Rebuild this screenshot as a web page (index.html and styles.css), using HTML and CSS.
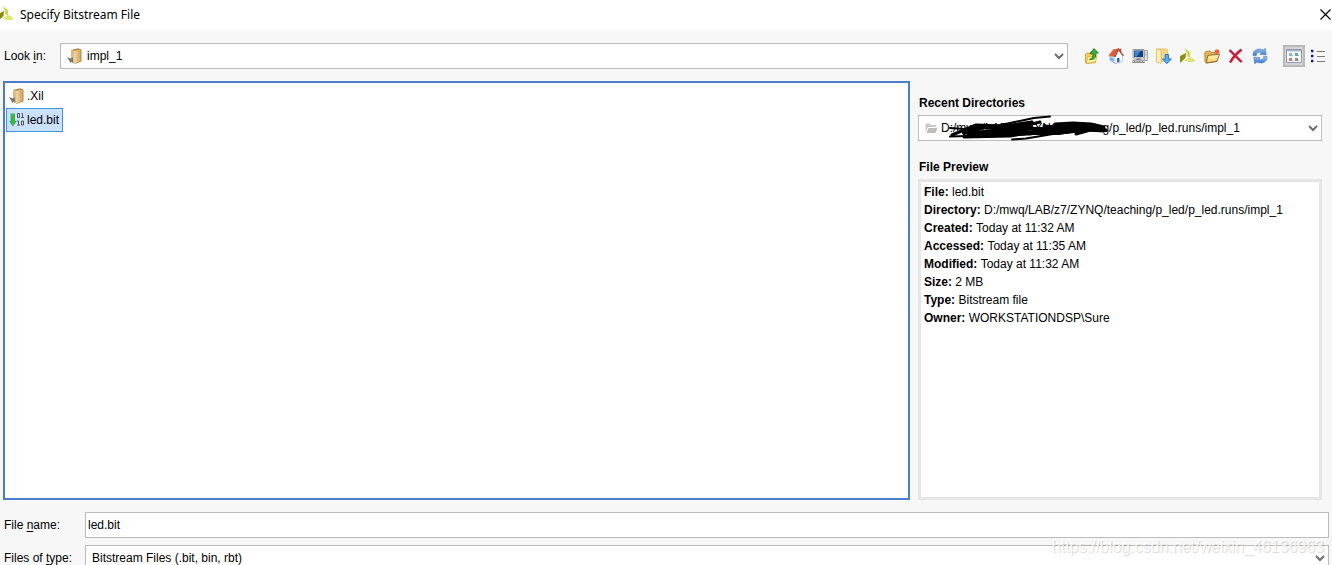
FILE: index.html
```html
<!DOCTYPE html>
<html lang="en">
<head>
<meta charset="utf-8">
<title>Specify Bitstream File</title>
<link rel="stylesheet" href="styles.css">
</head>
<body>
<svg class="defs" aria-hidden="true">
  <defs>
    <linearGradient id="tan" x1="0" x2="1"><stop offset="0" stop-color="#f3dcaa"/><stop offset="1" stop-color="#cfa566"/></linearGradient>
    <linearGradient id="gold" x1="0" y1="0" x2="0" y2="1"><stop offset="0" stop-color="#fff6b8"/><stop offset="1" stop-color="#f3ca5c"/></linearGradient>
    <linearGradient id="blue" x1="0" y1="0" x2="0" y2="1"><stop offset="0" stop-color="#9cc6f2"/><stop offset="1" stop-color="#3474c4"/></linearGradient>
    <symbol id="folder" viewBox="0 0 16 16">
      <path d="M4 2 11 .3 14.500 1.500v12L8 15.800 4 14z" fill="#b58c4c"/>
      <path d="M4 2.200 6.500 1.500v13L4 13.500z" fill="#dcb97a"/>
      <path d="m6.500 3 7-1.500v11.500L8 15.300l-1.500-.8z" fill="url(#tan)"/>
      <path d="M0 9 3.500 10.500 6 9.500v5L4 13.200V15.500L2 12.500z" fill="#7b7770"/>
    </symbol>
    <symbol id="xilinx" viewBox="0 0 16 16">
      <path d="M4.500 0 10 4.200V9H7.500L6.800 5z" fill="#d3d944"/>
      <path d="m0 8 6-3-.5 5L0 15z" fill="#8a8c13"/>
      <path d="m9 9.500 2-.5 5 4-4.500 1.500L4 12.500z" fill="#e0e478"/>
    </symbol>
    <symbol id="chevron" viewBox="0 0 10 7"><path d="m1 1 4 4 4-4" fill="none" stroke="#6e6e6e" stroke-width="2"/></symbol>
  </defs>
</svg>
<main class="dialog">
  <header class="titlebar">
    <svg class="logo" viewBox="2 0 14 16"><use href="#xilinx" width="16" height="16"/></svg>
    <h1 class="title">Specify Bitstream File</h1>
    <button class="close" aria-label="Close"><svg viewBox="0 0 11 11"><path d="m.5.5 10 10m0-10-10 10" stroke="#000" stroke-width="1.200"/></svg></button>
  </header>

  <div class="toolbar">
    <label for="look">Look <u>i</u>n:</label>
    <div class="field look">
      <svg class="icon"><use href="#folder"/></svg>
      <select id="look"><option>impl_1</option></select>
      <svg class="chevron"><use href="#chevron"/></svg>
    </div>
    <div class="tools">
      <button class="tool" aria-label="Up one level"><svg viewBox="0 0 16 16">
        <path d="M1.500 6 2.500 5h3l1 1.500h5v8l-9 1-1-1z" fill="#f3d05c" stroke="#d09a2c" stroke-width=".8"/>
        <path d="m3.500 9 9.500-1-1.500 6-9 1.300z" fill="#fff1a0" stroke="#d5a53c" stroke-width=".7"/>
        <path d="M5.500 11.500C8.500 10.500 9 9 9 5.500H5.800L10 .5l4.300 4.500H12C12 10 10 12 5.500 11.500z" fill="#3cae35" stroke="#197018" stroke-width=".8"/></svg></button>
      <button class="tool" aria-label="Home"><svg viewBox="0 0 16 16">
        <path d="M2 7.500V12l5.500 3.500 6.500-2V7L10 2z" fill="#c6dff8" stroke="#6f95c4" stroke-width=".8"/>
        <path d="m7.500 9 3.500-5 3 3.500v5.700L7.500 15.200z" fill="#fafcff"/>
        <path d="M11.500.8h1.800v4l-1.800-1.500z" fill="#a5482b"/>
        <path d="M.5 7.500 5.500 1.200 10.500.6 7 9l-3-.5z" fill="#d9603a"/>
        <path d="M6.700 9 10.600 1l4.900 7" fill="none" stroke="#b8492b" stroke-width="1.300"/>
        <path d="M9 10h2.500v3.800L9 14.500z" fill="#3768ae"/><path d="M3 9.500 5.500 11v2L3 11.500z" fill="#5a94d8"/></svg></button>
      <button class="tool" aria-label="My Computer"><svg viewBox="0 0 16 16">
        <path d="M12.500 2.500h3v10h-3z" fill="#e2e2e2" stroke="#999" stroke-width=".8"/><path d="M13 5h2M13 7h2" stroke="#aaa" stroke-width=".7"/>
        <path d="M1 1.500h11V10H1z" fill="#e8e9ea" stroke="#9a9a9a"/>
        <path d="M2 2.500h9V9H2z" fill="#143f80"/><path d="M2.500 3h6L5 8.500H2.500z" fill="#3f86c8"/>
        <path d="M4.500 10.300h4V12h-4z" fill="#888"/><path d="m1.500 12-1 2.500h12l-1-2.500z" fill="#eee" stroke="#777" stroke-width=".8"/><path d="M2 13.300h9" stroke="#666" stroke-dasharray="1 .6"/></svg></button>
      <button class="tool" aria-label="Downloads"><svg viewBox="0 0 16 16">
        <path d="M.5.5H10l2 1V14H.5z" fill="#e5c06a"/><path d="M5 1.500h6.500V14H5z" fill="#f1d68c"/><path d="M.5.8 5 2v13.500L.5 14z" fill="#fff0b7" stroke="#d3aa50" stroke-width=".6"/>
        <path d="M9.200 6.500h3.300V11h3l-4.700 4.700L6.500 11h2.700z" fill="#55aaf0" stroke="#1768b5" stroke-width=".8"/></svg></button>
      <button class="tool" aria-label="Vivado directory"><svg><use href="#xilinx"/></svg></button>
      <button class="tool" aria-label="New folder"><svg viewBox="0 0 16 16">
        <path d="M.8 4.500 2.500 3.300 6 3l1 1.500h6v9L2.500 15 1 13.500z" fill="#e6b84c" stroke="#a8782b" stroke-width=".8"/>
        <path d="m4 7.300 11.500-1L13 13.200 2 15z" fill="url(#gold)" stroke="#80602c" stroke-width=".9"/>
        <path d="m13 .3.800 2 2-.5-.8 2 .8 1.700-2-.2-.8 1.500-1-1.500-2 .2 1-1.700-.8-2 2 .5z" fill="#f0602e"/></svg></button>
      <button class="tool" aria-label="Delete"><svg viewBox="0 0 16 16" fill="none">
        <path d="M2.500 3 14.500 14.500M14 2.500C9 6 6 9.500 3 15" stroke="#888" stroke-width="2.200" opacity=".35"/><path d="m1.500 2 12 12M13.500 1.500C9 5 5 9 2 14.500" stroke="#cd1735" stroke-width="2.300"/></svg></button>
      <button class="tool" aria-label="Refresh"><svg viewBox="0 0 16 16" fill="url(#blue)" stroke="#4c7cb8" stroke-width=".6">
        <path d="M1 7.500C.5 2 6.500-.5 11 2l2.300-1.700.9 6.500-6.400-.5 1.700-1.500C6.500 3.500 4 5 4.300 7.800z"/>
        <path d="M15 8.500c.5 5.500-5.500 8-10 5.500l-2.300 1.700-.9-6.500 6.400.5-1.700 1.500C9.500 12.500 12 11 11.700 8.200z"/></svg></button>
    </div>
    <div class="views">
      <button class="tool pressed" aria-label="Icon view"><svg viewBox="0 0 16 16">
        <path d="M.5 1.500h15v13H.5z" fill="#fafcff" stroke="#8b9bb0"/><path d="M1 2h14v1.500H1z" fill="#a9b8ca"/>
        <path d="M3 5h3v3H3z" fill="#85b4dc"/><path d="M9 5h3v3H9z" fill="#67a8a0"/><path d="M3 10h3v3H3z" fill="#de7070"/><path d="M9 10h3v3H9z" fill="#8b8b8b"/><path d="M6 7.500h1.500M12 7.500h1.500M6 12.500h1.500M12 12.500h1.500" stroke="#bbb"/></svg></button>
      <button class="tool" aria-label="List view"><svg viewBox="0 0 16 16">
        <path d="M7 3.500h8m-8 5h8m-8 5h8" stroke="#777"/><path d="M1 3h2M1 8h2M1 13h2" stroke="#0014e0" stroke-width="2.400"/><path d="M3.500 2v2m0 3v2m0 3v2" stroke="#99a"/></svg></button>
    </div>
  </div>

  <div class="content">
    <section class="files" aria-label="Files">
      <button class="file"><svg class="icon"><use href="#folder"/></svg>.Xil</button>
      <button class="file selected"><svg class="icon" viewBox="0 0 16 16">
        <path d="M1.500 1.500H6V9h2l-4.200 5.500L0 9h1.500z" fill="#39b54a"/>
        <path d="M8.500 1.500h2v4h-2zM12.500 9h2v4h-2z" fill="none" stroke="#555"/><path d="M12.500 1.500h1V5M12 5.500h3M8 9h1.500v3.500M8 13h3" fill="none" stroke="#555"/></svg>led.bit</button>
    </section>
    <aside class="side">
      <label class="heading" for="recent">Recent Directories</label>
      <div class="field recent">
        <svg class="icon small" viewBox="0 0 13 12"><path d="M.5 10V1.500h4L6 3h5v2H3z" fill="#c8c8c8"/><path d="M3.500 6h9L10.500 11H1.500z" fill="#bdbdbd"/></svg>
        <select id="recent"><option>D:/mwq/LAB/z7/ZYNQ/teaching/p_led/p_led.runs/impl_1</option></select>
        <svg class="chevron"><use href="#chevron"/></svg>
        <svg class="scribble" viewBox="0 0 164 28" fill="none" stroke="#000" stroke-linecap="round" stroke-linejoin="round">
          <path stroke-width="2" d="M102 1.500 86 3 62 8 38 13 14 16M2 21.500l34-1 46-1 20-3M64 24.500l14-1 30-5M2 13l14 1 20-2"/>
          <path stroke-width="3" d="m4 20 24-10 28 1 28-4-30 7-34 5 40-4 32-8-36 9-40 6 46-1 32-5"/>
          <path stroke-width="4" d="m16 18 20-6 24 2 24-1-20 3-36 2 40 1 30-3"/>
          <path stroke-width="3" d="M107 9l18-1 18 1 13 3M106 12l20-2 24 3 8 2M96 11l26 2-18 5 32-6-24 6 28-3 16 1M128 19l18-5 10 0"/>
          <path stroke-width="4" d="M84 14l26 0 26-2-10 3-40 3 24 0 20-3 22-1"/>
        </svg>
      </div>
      <h2 class="heading">File Preview</h2>
      <dl class="preview">
        <div><dt>File:</dt> <dd>led.bit</dd></div>
        <div><dt>Directory:</dt> <dd>D:/mwq/LAB/z7/ZYNQ/teaching/p_led/p_led.runs/impl_1</dd></div>
        <div><dt>Created:</dt> <dd>Today at 11:32 AM</dd></div>
        <div><dt>Accessed:</dt> <dd>Today at 11:35 AM</dd></div>
        <div><dt>Modified:</dt> <dd>Today at 11:32 AM</dd></div>
        <div><dt>Size:</dt> <dd>2 MB</dd></div>
        <div><dt>Type:</dt> <dd>Bitstream file</dd></div>
        <div><dt>Owner:</dt> <dd>WORKSTATIONDSP\Sure</dd></div>
      </dl>
    </aside>
  </div>

  <form class="form">
    <label for="name">File <u>n</u>ame:</label>
    <div class="field"><input id="name" type="text" value="led.bit"></div>
    <label for="type">Files of <u>t</u>ype:</label>
    <div class="field type">
      <select id="type"><option>Bitstream Files (.bit, bin, rbt)</option></select>
      <svg class="chevron"><use href="#chevron"/></svg>
    </div>
  </form>
</main>
<span class="watermark">https://blog.csdn.net/weixin_46136963</span>
</body>
</html>
```
FILE: styles.css
```css
* { box-sizing: border-box; }

body {
  position: relative;
  height: 100vh;
  margin: 0;
  overflow: hidden;
  background: #f7f7f7;
  color: #000;
  font: 12px/18px "Liberation Sans", Arial, sans-serif;
}

button, input, select { color: inherit; font: inherit; }
button { padding: 0; border: 0; background: none; }
h1, h2, dl, dd { margin: 0; }
u { text-underline-offset: 2px; }
.defs { position: absolute; width: 0; height: 0; }

.dialog {
  display: flex;
  flex-direction: column;
  /* the type row continues below the fold */
  height: calc(100vh + 14px);
}

.titlebar {
  display: flex;
  align-items: center;
  height: 30px;
  background: #fff;
}
.logo { width: 14px; height: 16px; margin-right: 6px; margin-bottom: 2px; }
.title {
  flex: 1;
  font: 12px/18px "Noto Sans", sans-serif;
}
.close { width: 11px; height: 11px; margin-right: 1px; margin-bottom: 2px; }
.close svg { display: block; width: 11px; height: 11px; }

.toolbar {
  display: flex;
  align-items: center;
  padding: 13px 6px 12px 4px;
}
.toolbar label { width: 56px; }

.field {
  position: relative;
  display: flex;
  align-items: center;
  height: 26px;
  border: 1px solid #bcbcbc;
  background: #fff;
}
.field select, .field input {
  flex: 1;
  min-width: 0;
  height: 24px;
  padding: 0 24px 0 0;
  border: 0;
  outline: 0;
  background: transparent;
  appearance: none;
}
.field input { padding-left: 2px; }
.look { flex: 1; padding-left: 6px; }
.recent { padding-left: 6px; }
.type { padding-left: 6px; }
.icon { flex: none; width: 16px; height: 16px; margin-right: 4px; }
.icon.small { width: 13px; height: 12px; margin-right: 3px; }
.chevron {
  position: absolute;
  top: 9px;
  right: 3px;
  width: 10px;
  height: 7px;
  pointer-events: none;
}
.scribble {
  position: absolute;
  top: -1px;
  left: 29px;
  width: 164px;
  height: 28px;
  pointer-events: none;
}

.tools { display: flex; gap: 8px; margin-left: 16px; }
.views { display: flex; align-items: center; gap: 5px; margin-left: 15px; }
.tool { width: 16px; height: 16px; }
.tool svg { display: block; width: 16px; height: 16px; }
.pressed {
  width: 22px;
  height: 22px;
  padding: 1px;
  border: 2px solid #bababa;
  background: #d4d4d4;
}

.content {
  display: flex;
  flex: 1;
  gap: 8px;
  min-height: 0;
  padding: 0 10px 0 3px;
}
.files {
  display: flex;
  flex: 1;
  flex-direction: column;
  align-items: flex-start;
  padding: 1px;
  border: 2px solid #4a7dca;
  background: #fff;
}
.file {
  display: flex;
  align-items: center;
  height: 24px;
  padding: 0 3px 0 2px;
  border: 1px solid transparent;
}
.file .icon { margin-right: 2px; }
.selected { border-color: #3c96dc; background: #cce0ff; }

.side {
  display: flex;
  flex-direction: column;
  width: 404px;
  padding-top: 13px;
}
.heading {
  padding-left: 1px;
  margin-bottom: 3px;
  font-size: 12px;
  font-weight: bold;
  line-height: 18px;
}
.recent { margin-bottom: 17px; }
.preview {
  flex: 1;
  padding: 1px 3px;
  border: 3px solid #e6e6e6;
  background: #fff;
}
.preview dt, .preview dd { display: inline; }
.preview dt { font-weight: bold; }

.form {
  display: grid;
  grid-template-columns: 74px 1fr;
  align-items: center;
  gap: 7px;
  padding: 12px 3px 8px 4px;
}

.watermark {
  position: absolute;
  right: 8px;
  bottom: 8px;
  color: rgba(255, 255, 255, .7);
  font-size: 16px;
  line-height: 20px;
  text-shadow: 1px 1px 1px rgba(0, 0, 0, .16);
  pointer-events: none;
}
```
